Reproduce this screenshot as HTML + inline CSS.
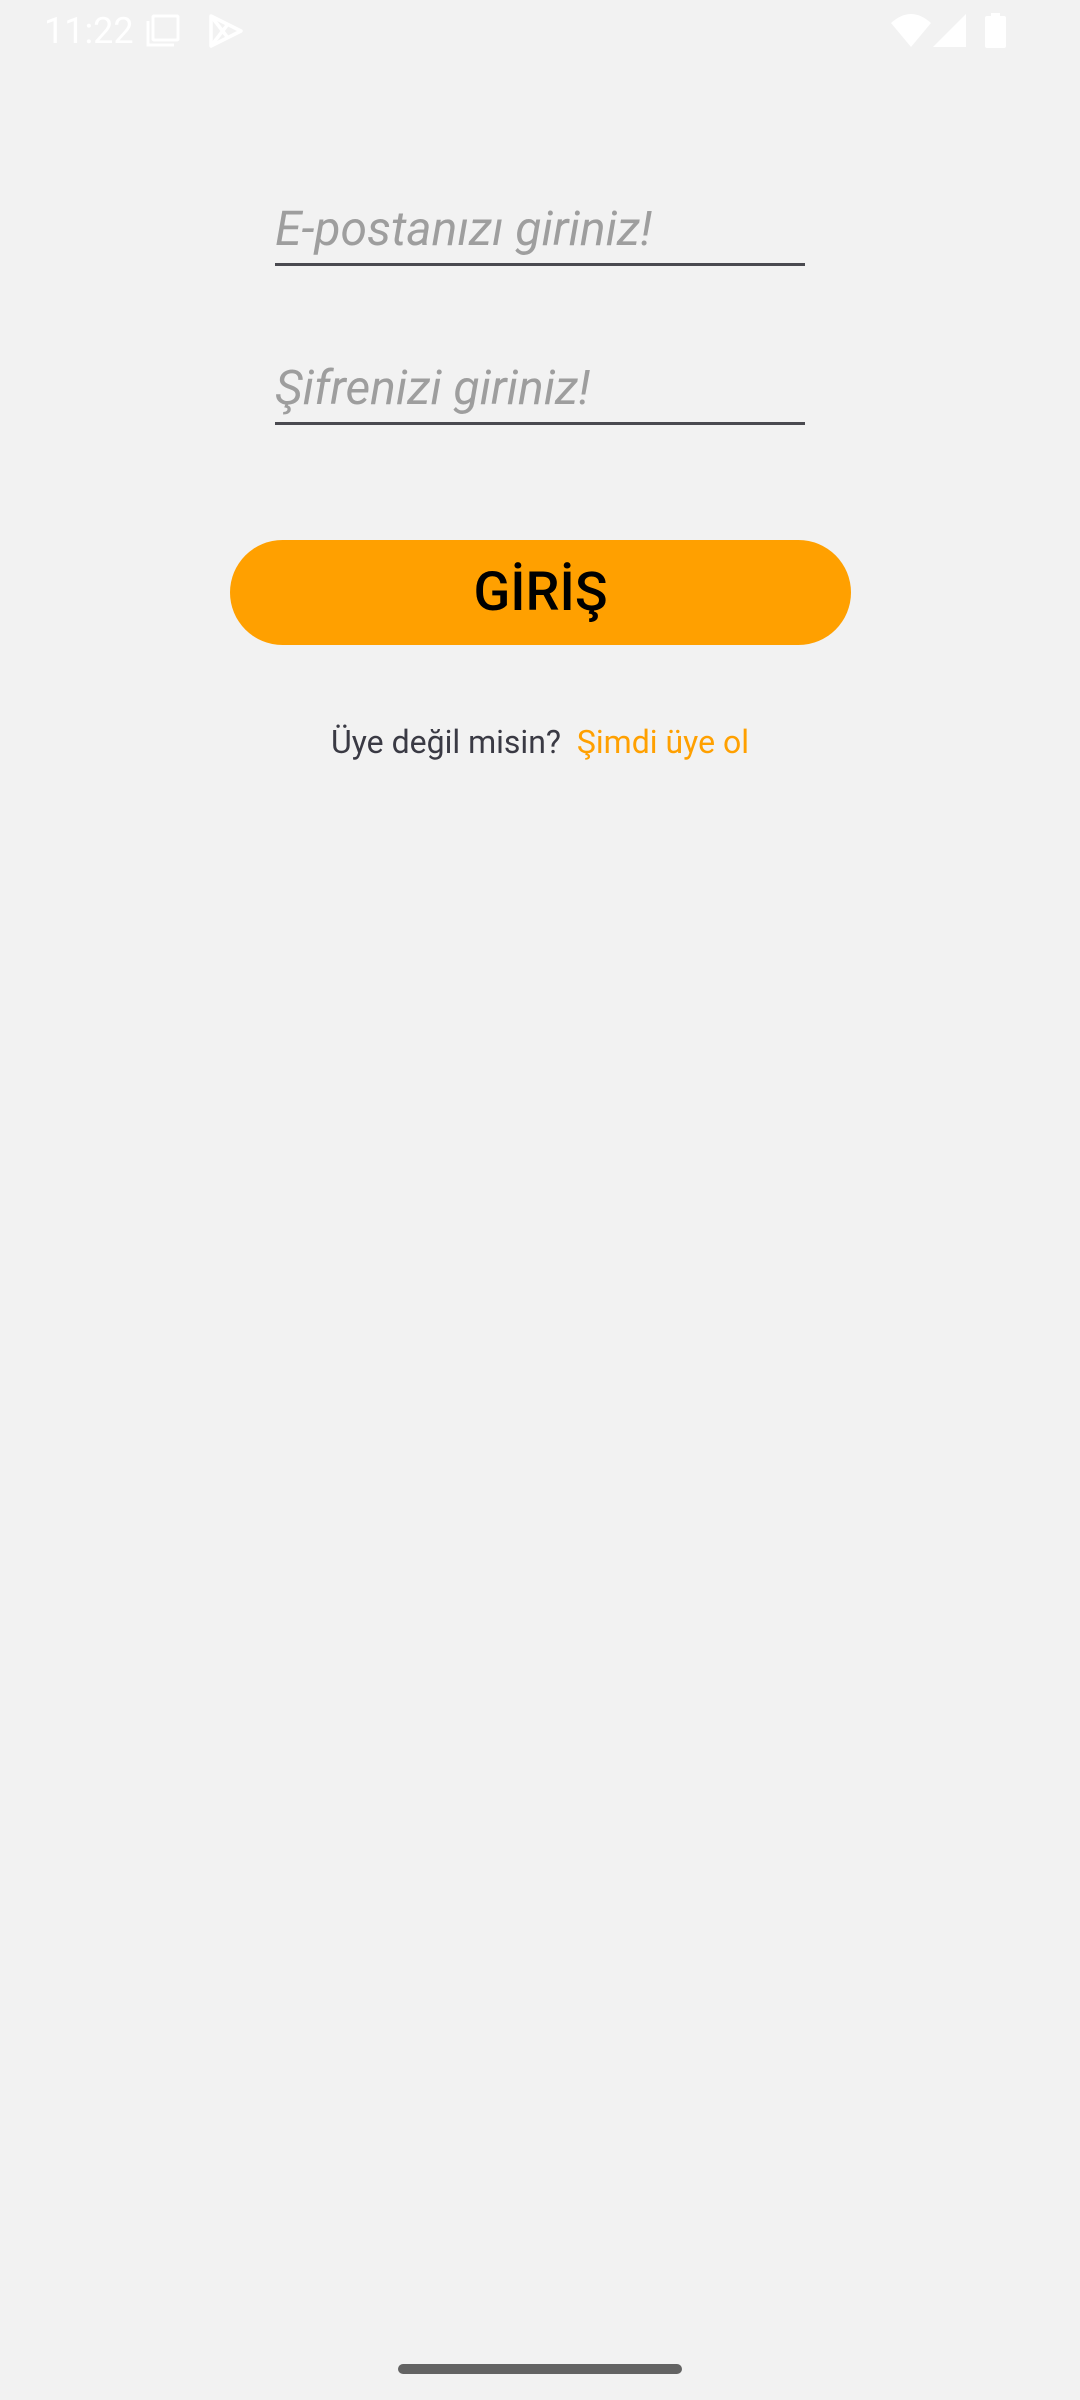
<!DOCTYPE html>
<html><head><meta charset="utf-8"><style>
html,body{margin:0;padding:0}
body{width:1080px;height:2400px;background:#f2f2f2;position:relative;overflow:hidden;font-family:"Roboto","Liberation Sans",sans-serif}
.abs{position:absolute}
.ph{font-style:italic;color:#9e9e9e;font-size:48px;white-space:nowrap;line-height:1}
.line{position:absolute;left:275px;width:530px;height:3px;background:#4a4a50}
</style></head><body>
<div class="abs" style="left:44px;top:10px;font-size:36px;color:#fff;line-height:42px">11:22</div>
<svg class="abs" style="left:146px;top:14px" width="36" height="34" viewBox="0 0 36 34" fill="none" stroke="#fff" stroke-width="3"><rect x="7" y="2" width="25" height="24" rx="1"/><path d="M2 7V31H28"/></svg>
<svg class="abs" style="left:208px;top:13px" width="36" height="36" viewBox="0 0 36 36" fill="none" stroke="#fff" stroke-width="3.5" stroke-linejoin="round"><path d="M3 3L33 18L3 33Z"/><path d="M3 3L20 25M3 33L20 11"/></svg>
<svg class="abs" style="left:890px;top:13px" width="42" height="34" viewBox="0 0 42 34"><path d="M1 10Q21 -8 41 10L21 34Z" fill="#fff"/></svg>
<svg class="abs" style="left:933px;top:14px" width="34" height="34" viewBox="0 0 34 34"><path d="M33 0V33H0Z" fill="#fff"/></svg>
<svg class="abs" style="left:985px;top:13px" width="21" height="35" viewBox="0 0 21 35"><rect x="6" y="0" width="9" height="4" fill="#fff"/><rect x="0" y="3" width="21" height="32" rx="2" fill="#fff"/></svg>

<div class="abs ph" style="left:275px;top:205px">E-postanızı giriniz!</div>
<div class="line" style="top:263px"></div>
<div class="abs ph" style="left:275px;top:364px">Şifrenizi giriniz!</div>
<div class="line" style="top:422px"></div>

<div class="abs" style="left:230px;top:540px;width:621px;height:105px;border-radius:53px;background:#ffa000;text-align:center;line-height:105px;font-size:54px;color:#000;font-weight:500">GİRİŞ</div>

<div class="abs" style="left:0;width:1080px;top:722px;text-align:center;font-size:32px;line-height:40px;white-space:nowrap"><span style="color:#3a3a44">Üye değil misin?</span>&nbsp; <span style="color:#ffa000">Şimdi üye ol</span></div>

<div class="abs" style="left:398px;top:2364px;width:284px;height:10px;border-radius:5px;background:#636363"></div>
</body></html>
